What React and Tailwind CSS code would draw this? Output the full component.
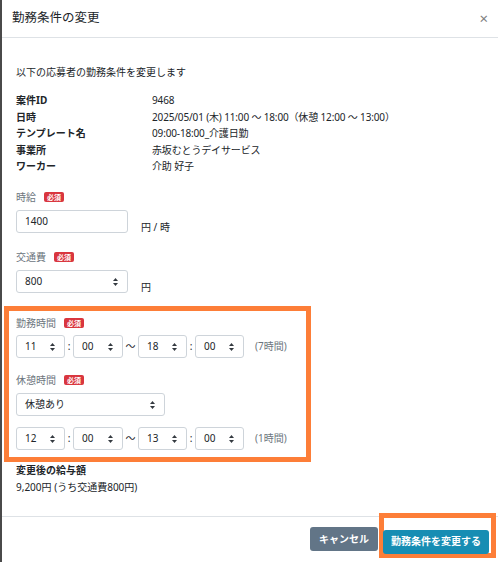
import React from "react";

const FONT = { fontFamily: '"Noto Sans", "Noto Sans CJK JP", sans-serif' };

function Arrows() {
  return (
    <svg width="5" height="8" viewBox="0 0 5 8" className="absolute right-[9px] top-1/2 -translate-y-1/2">
      <path d="M2.5 0 L5 3 L0 3 Z" fill="#343a40" />
      <path d="M0 5 L5 5 L2.5 8 Z" fill="#343a40" />
    </svg>
  );
}

function Select({ value, w, h = "h-[23px]" }) {
  return (
    <div className={`relative ${w} ${h} border border-[#ced4da] rounded-[3px] bg-white flex items-center pl-[8px] text-[10px] text-[#212529]`}>
      {value}
      <Arrows />
    </div>
  );
}

function Badge() {
  return (
    <span className="ml-[8px] inline-flex items-center justify-center w-[20px] h-[10px] rounded-[2px] bg-[#d9363e] text-white text-[7px] font-bold leading-none">
      必須
    </span>
  );
}

function Label({ children }) {
  return (
    <div className="flex items-center h-[16px] text-[10px] text-[#6c757d]">
      <span>{children}</span>
      <Badge />
    </div>
  );
}

function TimeRow({ a, b, c, d, dur }) {
  return (
    <div className="flex items-center h-[23px]">
      <Select value={a} w="w-[49px]" />
      <span className="w-[8px] text-center text-[10px] text-[#212529]">:</span>
      <Select value={b} w="w-[50px]" />
      <span className="w-[15px] text-center text-[10px] text-[#212529]">〜</span>
      <Select value={c} w="w-[49px]" />
      <span className="w-[8px] text-center text-[10px] text-[#212529]">:</span>
      <Select value={d} w="w-[49px]" />
      <span className="ml-[11px] text-[10px] text-[#6c757d]">{dur}</span>
    </div>
  );
}

export default function App() {
  const info = [
    ["案件ID", "9468"],
    ["日時", "2025/05/01 (木) 11:00 〜 18:00（休憩 12:00 〜 13:00）"],
    ["テンプレート名", "09:00-18:00_介護日勤"],
    ["事業所", "赤坂むとうデイサービス"],
    ["ワーカー", "介助 好子"],
  ];
  return (
    <div style={FONT} className="w-[498px] h-[562px] bg-white flex flex-col border-l-2 border-[#4a4a4a] overflow-hidden text-[#212529]">
      <div className="h-[38px] border-b border-[#dee2e6] flex items-center justify-between pl-[10px] pr-[10px] shrink-0">
        <span className="text-[12.5px]">勤務条件の変更</span>
        <span className="text-[15px] text-[#808080] leading-none">×</span>
      </div>
      <div className="flex-1 px-[14px] pt-[26px]">
        <p className="text-[10px] leading-[16px]">以下の応募者の勤務条件を変更します</p>
        <div className="mt-[12px]">
          {info.map(([k, v]) => (
            <div key={k} className="flex text-[10px] leading-[16.5px]">
              <span className="w-[136px] font-bold">{k}</span>
              <span className="tracking-[-0.15px]">{v}</span>
            </div>
          ))}
        </div>
        <div className="mt-[14.5px]">
          <Label>時給</Label>
          <div className="flex items-end mt-[5px]">
            <div className="w-[112px] h-[23px] border border-[#ced4da] rounded-[3px] flex items-center pl-[8px] text-[10px]">1400</div>
            <span className="ml-[13px] text-[10px] leading-[16px] mb-[-2px]">円 / 時</span>
          </div>
        </div>
        <div className="mt-[16px]">
          <Label>交通費</Label>
          <div className="flex items-end mt-[5px]">
            <Select value="800" w="w-[112px]" />
            <span className="ml-[13px] text-[10px] leading-[16px] mb-[-2px]">円</span>
          </div>
        </div>
        <div className="relative mt-[22px]">
          <div className="absolute left-[-12px] top-[-9px] w-[307px] h-[156px] border-[5px] border-[#fd7e38] pointer-events-none" />
          <Label>勤務時間</Label>
          <div className="mt-[4px]">
            <TimeRow a="11" b="00" c="18" d="00" dur="(7時間)" />
          </div>
          <div className="mt-[14px]">
            <Label>休憩時間</Label>
          </div>
          <div className="mt-[5px]">
            <Select value="休憩あり" w="w-[149px]" />
          </div>
          <div className="mt-[11px]">
            <TimeRow a="12" b="00" c="13" d="00" dur="(1時間)" />
          </div>
        </div>
        <div className="mt-[12px] text-[10px] leading-[16px]">
          <div className="font-bold">変更後の給与額</div>
          <div className="mt-[1px]">9,200円 (うち交通費800円)</div>
        </div>
      </div>
      <div className="h-[46px] border-t border-[#dee2e6] flex justify-end items-start pt-[10px] pr-[9px] shrink-0">
        <button className="h-[24px] px-[9px] rounded-[3px] bg-[#627587] text-white text-[10px] font-bold">キャンセル</button>
        <div className="relative ml-[5px]">
          <div className="absolute left-[-4px] top-[-14px] w-[117px] h-[45px] border-[5px] border-[#fd7e38] pointer-events-none" />
          <button className="relative h-[24px] px-[8px] rounded-[3px] bg-[#178db3] text-white text-[10px] font-bold">勤務条件を変更する</button>
        </div>
      </div>
    </div>
  );
}
